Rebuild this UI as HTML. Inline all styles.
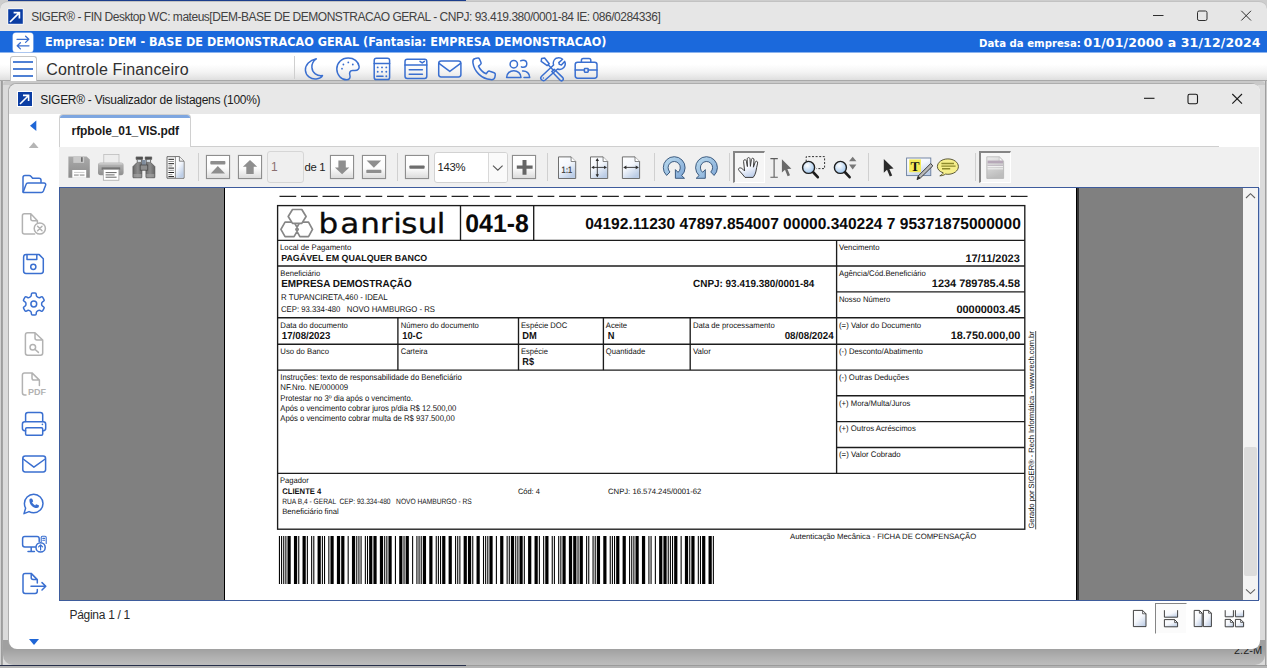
<!DOCTYPE html>
<html lang="pt-BR"><head><meta charset="utf-8"><title>SIGER - Visualizador de listagens</title>
<style>
html,body{margin:0;padding:0}
body{width:1267px;height:668px;overflow:hidden;position:relative;background:#cdcdcd;font-family:"Liberation Sans",sans-serif}
div,span.t,svg.a{position:absolute;box-sizing:border-box}
span.t{white-space:pre;display:block}
svg text{white-space:pre;text-rendering:geometricPrecision}
</style></head><body>
<div style="left:8px;top:0px;width:458px;height:1px;background:#1b3d8c"></div>
<div style="left:8px;top:1px;width:458px;height:1px;background:#7f90b8"></div>
<div class="mainwin" style="left:0px;top:1px;width:1267px;height:665px;background:#e6e6e6;border-radius:8px 8px 0 0;border-top:1px solid #c2c2c2"></div>
<svg class="a" style="left:7px;top:8px" width="17" height="17" viewBox="0 0 17 17"><rect x="0.5" y="0.5" width="16" height="16" fill="#fff"/><rect x="1.2" y="1.2" width="14.6" height="14.6" fill="#0b3da3"/><path d="M3 14 L11.6 5.4 M6.6 4.6 H12.4 V10.4" fill="none" stroke="#fff" stroke-width="1.7"/></svg>
<span class="t" style='left:31.20px;top:8.54px;font:12px/16px "Liberation Sans", sans-serif;color:#424242;letter-spacing:-0.474px;'>SIGER® - FIN Desktop WC: mateus[DEM-BASE DE DEMONSTRACAO GERAL - CNPJ: 93.419.380/0001-84 IE: 086/0284336]</span>
<svg class="a" style="left:1140px;top:4px" width="124" height="24" viewBox="1140 4 124 24" fill="none" stroke="#2e2e2e" stroke-width="1"><path d="M1153 15.5H1163.5"/><rect x="1197.5" y="11" width="9.5" height="9.5" rx="1.6"/><path d="M1241.3 10.8L1251 20.5M1251 10.8L1241.3 20.5"/></svg>
<div style="left:0px;top:31px;width:1267px;height:21px;background:#1b69dc"></div>
<div style="left:0px;top:52px;width:1267px;height:1px;background:#8db4ee"></div>
<div style="left:13px;top:33px;width:20px;height:19px;background:#fff;border-radius:3px;box-shadow:0 0 0 0.5px #c9d8f2"></div>
<svg class="a" style="left:13px;top:33px" width="20" height="19" viewBox="0 0 20 19" fill="none" stroke="#3b6fd0" stroke-width="1.3" stroke-linecap="round" stroke-linejoin="round"><path d="M4 6.3H15.5M12.6 3.2L15.8 6.3L12.6 9.4"/><path d="M16 12.8H4.5M7.4 9.7L4.2 12.8L7.4 15.9"/></svg>
<span class="t" style='left:44.80px;top:34.25px;font:bold 12px/16px "DejaVu Sans", sans-serif;color:#fff;transform:scaleX(0.9371);transform-origin:0 0;'>Empresa: DEM - BASE DE DEMONSTRACAO GERAL (Fantasia: EMPRESA DEMONSTRACAO)</span>
<span class="t" style='left:979.20px;top:36.59px;font:bold 11px/14px "DejaVu Sans", sans-serif;color:#fff;transform:scaleX(0.9234);transform-origin:0 0;'>Data da empresa:</span>
<span class="t" style='left:1083.60px;top:35.17px;font:bold 12.5px/16px "DejaVu Sans", sans-serif;color:#fff;letter-spacing:0.106px;'>01/01/2000 a 31/12/2024</span>
<div style="left:0px;top:53px;width:1267px;height:28px;background:linear-gradient(#fff 0,#fff 42%,#f4f4f4 70%,#dfdfdf 100%);border-bottom:1px solid #a9a9a9"></div>
<div style="left:9.5px;top:55.5px;width:27px;height:26px;border:1px solid #c4c4c4;border-bottom:none;border-radius:3px 3px 0 0;background:#fff"></div>
<div style="left:13px;top:61px;width:19.5px;height:2px;background:#4f80d4"></div>
<div style="left:13px;top:67.5px;width:19.5px;height:2px;background:#4f80d4"></div>
<div style="left:13px;top:74.5px;width:19.5px;height:2px;background:#4f80d4"></div>
<span class="t" style='left:46.20px;top:58.66px;font:16px/21px "Liberation Sans", sans-serif;color:#303030;letter-spacing:0.162px;'>Controle Financeiro</span>
<div style="left:293.5px;top:56px;width:1px;height:23px;background:#cfcfcf"></div>
<div style="left:0px;top:81px;width:1267px;height:585px;background:#dbdbdb"></div>
<div style="left:0px;top:81px;width:1px;height:585px;background:#d2d2d2"></div>
<div style="left:1px;top:81px;width:2px;height:585px;background:linear-gradient(90deg,#9a9a9a,#a8a8a8)"></div>
<div style="left:1265px;top:81px;width:1px;height:585px;background:#a0a0a0"></div>
<div style="left:1266px;top:81px;width:1px;height:585px;background:#cacaca"></div>
<div style="left:3px;top:81px;width:1262px;height:4px;background:#c9c9c9;border-radius:9px 9px 0 0"></div>
<div style="left:3px;top:640px;width:1262px;height:25px;background:linear-gradient(#a0a0a0 0,#a0a0a0 36%,#b1b1b1 70%,#bcbcbc 100%);border-radius:0 0 10px 10px"></div>
<div style="left:0px;top:665px;width:1267px;height:1px;background:#9b9b9b"></div>
<div style="left:0px;top:665px;width:466px;height:1px;background:#272f4a"></div>
<div style="left:0px;top:666px;width:1267px;height:2px;background:#b4b4b4"></div>
<span class="t" style='left:1234.00px;top:643.39px;font:11px/14px "Liberation Sans", sans-serif;color:#222;'>2.2-M</span>
<div class="innerwin" style="left:9px;top:84px;width:1251px;height:565px;background:#fff;border-radius:8px;box-shadow:-1px -1px 0 0 #aeaeae;overflow:hidden"><div style="left:0;top:0;width:1252px;height:29.5px;background:#e8e8e8"></div></div>
<svg class="a" style="left:17px;top:91px" width="16" height="16" viewBox="0 0 16 16"><rect x="0" y="0" width="16" height="16" fill="#fff"/><rect x="1" y="1" width="14" height="14" fill="#0b3da3"/><path d="M3 13 L10.8 5.2 M6 4.4 H11.6 V10" fill="none" stroke="#fff" stroke-width="1.6"/></svg>
<span class="t" style='left:40.30px;top:91.94px;font:12px/16px "Liberation Sans", sans-serif;color:#1c1c1c;letter-spacing:-0.278px;'>SIGER® - Visualizador de listagens (100%)</span>
<svg class="a" style="left:1135px;top:88px" width="120" height="22" viewBox="1135 88 120 22" fill="none" stroke="#1a1a1a" stroke-width="1.1"><path d="M1144 98.3H1154.5"/><rect x="1188" y="94.3" width="9.5" height="9.5" rx="1.6"/><path d="M1232.3 94L1242 103.7M1242 94L1232.3 103.7"/></svg>
<svg class="a" style="left:28px;top:119px" width="12" height="32" viewBox="28 119 12 32"><path d="M36.3 120.5V131L30 125.8Z" fill="#1f66d6"/><path d="M28.8 148H38.6L33.7 142.3Z" fill="#b5b5b5"/></svg>
<svg class="a" style="left:27px;top:637px" width="14" height="10" viewBox="27 637 14 10"><path d="M29 639H39L34 645Z" fill="#1f66d6"/></svg>
<div style="left:59px;top:146px;width:1160px;height:1px;background:#cfcfcf"></div>
<div style="left:59px;top:114px;width:132px;height:33px;background:#fff;border:1px solid #d0d0d0;border-bottom:none;border-radius:4px 4px 0 0;overflow:hidden"><div style="left:0;top:0;width:132px;height:3px;background:#7ea6e0"></div></div>
<span class="t" style='left:71.60px;top:122.84px;font:bold 12px/16px "Liberation Sans", sans-serif;color:#1a1a1a;letter-spacing:-0.072px;'>rfpbole_01_VIS.pdf</span>
<div style="left:59px;top:147px;width:1200px;height:40px;background:#f0f0f0"></div>
<div style="left:198.0px;top:152.5px;width:1px;height:28px;background:#d0d0d0"></div>
<div style="left:396.8px;top:152.5px;width:1px;height:28px;background:#d0d0d0"></div>
<div style="left:547.1px;top:152.5px;width:1px;height:28px;background:#d0d0d0"></div>
<div style="left:653.9px;top:152.5px;width:1px;height:28px;background:#d0d0d0"></div>
<div style="left:729.2px;top:152.5px;width:1px;height:28px;background:#d0d0d0"></div>
<div style="left:867.9px;top:152.5px;width:1px;height:28px;background:#d0d0d0"></div>
<div style="left:975.0px;top:152.5px;width:1px;height:28px;background:#d0d0d0"></div>
<div style="left:206px;top:155px;width:24px;height:24px;background:linear-gradient(#fff 0,#fcfcfc 55%,#dcdcdc 100%);border:1px solid #8e8e8e;box-shadow:0 0 1px rgba(0,0,0,.25)"></div>
<div style="left:238px;top:155px;width:24px;height:24px;background:linear-gradient(#fff 0,#fcfcfc 55%,#dcdcdc 100%);border:1px solid #8e8e8e;box-shadow:0 0 1px rgba(0,0,0,.25)"></div>
<div style="left:330px;top:155px;width:24px;height:24px;background:linear-gradient(#fff 0,#fcfcfc 55%,#dcdcdc 100%);border:1px solid #8e8e8e;box-shadow:0 0 1px rgba(0,0,0,.25)"></div>
<div style="left:362px;top:155px;width:24px;height:24px;background:linear-gradient(#fff 0,#fcfcfc 55%,#dcdcdc 100%);border:1px solid #8e8e8e;box-shadow:0 0 1px rgba(0,0,0,.25)"></div>
<div style="left:405px;top:155px;width:24px;height:24px;background:linear-gradient(#fff 0,#fcfcfc 55%,#dcdcdc 100%);border:1px solid #8e8e8e;box-shadow:0 0 1px rgba(0,0,0,.25)"></div>
<div style="left:512px;top:155px;width:24px;height:24px;background:linear-gradient(#fff 0,#fcfcfc 55%,#dcdcdc 100%);border:1px solid #8e8e8e;box-shadow:0 0 1px rgba(0,0,0,.25)"></div>
<div style="left:266.5px;top:151px;width:37px;height:31.5px;background:#efefef;border:1px solid #d6d6d6;border-radius:3px"></div>
<span class="t" style='left:271.00px;top:159.14px;font:12px/16px "Liberation Sans", sans-serif;color:#8a6f6f;'>1</span>
<span class="t" style='left:304.50px;top:159.88px;font:11.3px/15px "Liberation Sans", sans-serif;color:#222;letter-spacing:-0.298px;'>de 1</span>
<div style="left:433.5px;top:151.5px;width:74px;height:31px;background:#fff;border:1px solid #d2d2d2;border-radius:3px;overflow:hidden"><div style="left:53px;top:0;width:1px;height:31px;background:#d9d9d9"></div><div style="left:54px;top:0;width:19px;height:31px;background:#fafafa"></div></div>
<span class="t" style='left:437.60px;top:160.38px;font:11.3px/15px "Liberation Sans", sans-serif;color:#222;letter-spacing:-0.275px;'>143%</span>
<svg class="a" style="left:491px;top:163px" width="14" height="9" viewBox="491 163 14 9" fill="none" stroke="#555" stroke-width="1.1"><path d="M493 165.6L497.8 170.2L502.6 165.6"/></svg>
<div style="left:733px;top:151px;width:32px;height:32px;background:#f6f6f6;border-top:2px solid #858585;border-left:2px solid #858585;border-right:1px solid #fff;border-bottom:1px solid #fff"></div>
<div style="left:979px;top:151px;width:32px;height:32px;background:#f6f6f6;border-top:2px solid #858585;border-left:2px solid #858585;border-right:1px solid #fff;border-bottom:1px solid #fff"></div>
<div class="viewport" style="left:59px;top:187px;width:1200px;height:414px;background:#808080;border:1px solid #3e5c9c;overflow:hidden"></div>
<div style="left:1259px;top:188px;width:1px;height:412px;background:#b8caea"></div>
<div style="left:1243px;top:188px;width:15px;height:412px;background:#f3f3f3"></div>
<div style="left:1243.5px;top:446.5px;width:13.5px;height:129px;background:#dcdcdc;border-radius:2px"></div>
<svg class="a" style="left:1243px;top:190px" width="15" height="12" viewBox="1243 190 15 12" fill="none" stroke="#606060" stroke-width="1.1"><path d="M1246 198L1250.5 193.7L1255 198"/></svg>
<svg class="a" style="left:1243px;top:586px" width="15" height="12" viewBox="1243 586 15 12" fill="none" stroke="#606060" stroke-width="1.1"><path d="M1246 589.3L1250.5 593.6L1255 589.3"/></svg>
<span class="t" style='left:69.50px;top:606.84px;font:12px/16px "Liberation Sans", sans-serif;color:#2a2a2a;letter-spacing:-0.296px;'>Página 1 / 1</span>
<div style="left:1155px;top:603px;width:32px;height:31px;border-top:1.5px solid #858585;border-left:1.5px solid #858585;border-right:1px solid #fff;border-bottom:1px solid #fff;background:#fbfbfb"></div>
<div style="left:60px;top:188px;width:1183px;height:412px;overflow:hidden"><svg class="a" style="left:-60px;top:-188px" width="1267" height="668" viewBox="0 0 1267 668" font-family='"Liberation Sans", sans-serif'><rect x="59" y="187" width="1200" height="414" fill="#808080"/>
<rect x="224" y="188" width="853" height="413" fill="#000"/>
<rect x="1077" y="188" width="2" height="413" fill="#333"/>
<rect x="225" y="188" width="851" height="413" fill="#fff"/>
<path d="M279.5 196.4H1027.7" stroke="#222" stroke-width="1.2" stroke-dasharray="16.7 4.81"/>
<rect x="277.6" y="205.6" width="747.1999999999999" height="323.6" fill="none" stroke="#1c1c1c" stroke-width="1.35"/>
<path d="M277.6 240.3H1024.8" stroke="#1c1c1c" stroke-width="1.35"/>
<path d="M277.6 266.0H1024.8" stroke="#1c1c1c" stroke-width="1.35"/>
<path d="M836.6 291.8H1024.8" stroke="#1c1c1c" stroke-width="1.35"/>
<path d="M277.6 317.7H1024.8" stroke="#1c1c1c" stroke-width="1.35"/>
<path d="M277.6 344.2H1024.8" stroke="#1c1c1c" stroke-width="1.35"/>
<path d="M277.6 370.1H1024.8" stroke="#1c1c1c" stroke-width="1.35"/>
<path d="M836.6 395.7H1024.8" stroke="#1c1c1c" stroke-width="1.35"/>
<path d="M836.6 421.6H1024.8" stroke="#1c1c1c" stroke-width="1.35"/>
<path d="M836.6 447.5H1024.8" stroke="#1c1c1c" stroke-width="1.35"/>
<path d="M277.6 473.3H1024.8" stroke="#1c1c1c" stroke-width="1.35"/>
<path d="M460.5 205.6V240.3" stroke="#1c1c1c" stroke-width="1.35"/>
<path d="M533.7 205.6V240.3" stroke="#1c1c1c" stroke-width="1.35"/>
<path d="M836.6 240.3V473.3" stroke="#1c1c1c" stroke-width="1.35"/>
<path d="M397.9 317.7V370.1" stroke="#1c1c1c" stroke-width="1.35"/>
<path d="M518.5 317.7V370.1" stroke="#1c1c1c" stroke-width="1.35"/>
<path d="M603.4 317.7V370.1" stroke="#1c1c1c" stroke-width="1.35"/>
<path d="M690.2 317.7V370.1" stroke="#1c1c1c" stroke-width="1.35"/>
<path d="M280.90 229.45L285.05 222.20L294.05 222.20L298.20 229.45L294.05 236.70L285.05 236.70ZM295.90 229.45L299.88 222.20L308.52 222.20L312.50 229.45L308.52 236.70L299.88 236.70Z" fill="none" stroke="#868686" stroke-width="1.7" stroke-linejoin="round"/><path d="M288.20 216.45L292.50 209.50L301.80 209.50L306.10 216.45L301.80 223.40L292.50 223.40Z" fill="#fff" stroke="#868686" stroke-width="1.7" stroke-linejoin="round"/>
<text transform="scale(1.12 1)" x="284.46 303.90 321.63 339.30 351.06 358.20 373.09 390.03" y="232.9" font-size="27.7" font-family='"DejaVu Sans", sans-serif' fill="#0a0a0a" stroke="#0a0a0a" stroke-width="0.3">banrisul</text>
<text x="465.30" y="231.70" font-size="25.4" font-weight="bold" fill="#0a0a0a" textLength="63.50" lengthAdjust="spacingAndGlyphs">041-8</text>
<text x="585.20" y="228.90" font-size="15.9" font-weight="bold" fill="#0a0a0a" textLength="435.60" lengthAdjust="spacingAndGlyphs">04192.11230 47897.854007 00000.340224 7 95371875000000</text>
<text x="280.00" y="250.00" font-size="8.1" fill="#111" textLength="71.20" lengthAdjust="spacingAndGlyphs">Local de Pagamento</text>
<text x="281.20" y="260.80" font-size="8.8" font-weight="bold" fill="#111" textLength="146.10" lengthAdjust="spacingAndGlyphs">PAGÁVEL EM QUALQUER BANCO</text>
<text x="280.30" y="275.50" font-size="8.1" fill="#111" textLength="39.90" lengthAdjust="spacingAndGlyphs">Beneficiário</text>
<text x="281.20" y="287.30" font-size="10.3" font-weight="bold" fill="#111" textLength="130.60" lengthAdjust="spacingAndGlyphs">EMPRESA DEMOSTRAÇÃO</text>
<text x="693.10" y="287.40" font-size="10.3" font-weight="bold" fill="#111" textLength="121.30" lengthAdjust="spacingAndGlyphs">CNPJ: 93.419.380/0001-84</text>
<text x="281.00" y="299.60" font-size="8.4" fill="#111" textLength="106.60" lengthAdjust="spacingAndGlyphs">R TUPANCIRETA,460 - IDEAL</text>
<text x="281.00" y="312.20" font-size="8.4" fill="#111" textLength="154.00" lengthAdjust="spacingAndGlyphs">CEP: 93.334-480   NOVO HAMBURGO - RS</text>
<text x="280.30" y="327.50" font-size="8.1" fill="#111" textLength="67.64" lengthAdjust="spacingAndGlyphs">Data do documento</text>
<text x="281.80" y="338.70" font-size="10.2" font-weight="bold" fill="#111" textLength="48.50" lengthAdjust="spacingAndGlyphs">17/08/2023</text>
<text x="400.70" y="327.50" font-size="8.1" fill="#111" textLength="78.20" lengthAdjust="spacingAndGlyphs">Número do documento</text>
<text x="402.30" y="338.70" font-size="10.2" font-weight="bold" fill="#111" textLength="20.10" lengthAdjust="spacingAndGlyphs">10-C</text>
<text x="521.00" y="327.50" font-size="8.1" fill="#111" textLength="46.30" lengthAdjust="spacingAndGlyphs">Espécie DOC</text>
<text x="522.30" y="338.70" font-size="10.2" font-weight="bold" fill="#111" textLength="14.50" lengthAdjust="spacingAndGlyphs">DM</text>
<text x="605.80" y="327.50" font-size="8.1" fill="#111" textLength="21.30" lengthAdjust="spacingAndGlyphs">Aceite</text>
<text x="607.80" y="338.70" font-size="10.2" font-weight="bold" fill="#111" textLength="6.70" lengthAdjust="spacingAndGlyphs">N</text>
<text x="692.90" y="327.50" font-size="8.1" fill="#111" textLength="81.90" lengthAdjust="spacingAndGlyphs">Data de processamento</text>
<text x="784.70" y="338.70" font-size="10.2" font-weight="bold" fill="#111" textLength="48.90" lengthAdjust="spacingAndGlyphs">08/08/2024</text>
<text x="280.30" y="354.00" font-size="8.1" fill="#111" textLength="48.68" lengthAdjust="spacingAndGlyphs">Uso do Banco</text>
<text x="400.70" y="354.00" font-size="8.1" fill="#111" textLength="26.90" lengthAdjust="spacingAndGlyphs">Carteira</text>
<text x="521.00" y="354.00" font-size="8.1" fill="#111" textLength="26.90" lengthAdjust="spacingAndGlyphs">Espécie</text>
<text x="522.30" y="364.60" font-size="10.2" font-weight="bold" fill="#111" textLength="11.70" lengthAdjust="spacingAndGlyphs">R$</text>
<text x="605.80" y="354.00" font-size="8.1" fill="#111" textLength="39.40" lengthAdjust="spacingAndGlyphs">Quantidade</text>
<text x="692.90" y="354.00" font-size="8.1" fill="#111" textLength="17.90" lengthAdjust="spacingAndGlyphs">Valor</text>
<text x="839.00" y="250.20" font-size="8.1" fill="#111" textLength="40.60" lengthAdjust="spacingAndGlyphs">Vencimento</text>
<text x="965.40" y="261.60" font-size="10.9" font-weight="bold" fill="#111" textLength="54.40" lengthAdjust="spacingAndGlyphs">17/11/2023</text>
<text x="839.00" y="276.00" font-size="8.1" fill="#111" textLength="86.80" lengthAdjust="spacingAndGlyphs">Agência/Cód.Beneficiário</text>
<text x="931.80" y="287.40" font-size="10.9" font-weight="bold" fill="#111" textLength="88.20" lengthAdjust="spacingAndGlyphs">1234 789785.4.58</text>
<text x="839.00" y="301.80" font-size="8.1" fill="#111" textLength="51.30" lengthAdjust="spacingAndGlyphs">Nosso Número</text>
<text x="956.40" y="313.10" font-size="10.9" font-weight="bold" fill="#111" textLength="64.00" lengthAdjust="spacingAndGlyphs">00000003.45</text>
<text x="839.00" y="327.90" font-size="8.1" fill="#111" textLength="82.20" lengthAdjust="spacingAndGlyphs">(=) Valor do Documento</text>
<text x="950.70" y="339.20" font-size="10.9" font-weight="bold" fill="#111" textLength="69.70" lengthAdjust="spacingAndGlyphs">18.750.000,00</text>
<text x="839.00" y="354.10" font-size="8.1" fill="#111" textLength="83.90" lengthAdjust="spacingAndGlyphs">(-) Desconto/Abatimento</text>
<text x="839.00" y="379.70" font-size="8.1" fill="#111" textLength="70.00" lengthAdjust="spacingAndGlyphs">(-) Outras Deduções</text>
<text x="839.00" y="405.60" font-size="8.1" fill="#111" textLength="71.30" lengthAdjust="spacingAndGlyphs">(+) Mora/Multa/Juros</text>
<text x="839.00" y="431.30" font-size="8.1" fill="#111" textLength="76.80" lengthAdjust="spacingAndGlyphs">(+) Outros Acréscimos</text>
<text x="839.00" y="457.10" font-size="8.1" fill="#111" textLength="61.70" lengthAdjust="spacingAndGlyphs">(=) Valor Cobrado</text>
<text x="280.30" y="380.20" font-size="8.4" fill="#111" textLength="181.50" lengthAdjust="spacingAndGlyphs">Instruções: texto de responsabilidade do Beneficiário</text>
<text x="280.30" y="390.40" font-size="8.4" fill="#111" textLength="67.80" lengthAdjust="spacingAndGlyphs">NF.Nro. NE/000009</text>
<text x="280.30" y="400.70" font-size="8.4" fill="#111" textLength="132.60" lengthAdjust="spacingAndGlyphs">Protestar no 3º dia após o vencimento.</text>
<text x="280.30" y="410.90" font-size="8.4" fill="#111" textLength="176.00" lengthAdjust="spacingAndGlyphs">Após o vencimento cobrar juros p/dia R$ 12.500,00</text>
<text x="280.30" y="421.10" font-size="8.4" fill="#111" textLength="174.40" lengthAdjust="spacingAndGlyphs">Após o vencimento cobrar multa de R$ 937.500,00</text>
<text x="280.00" y="483.40" font-size="8.1" fill="#111" textLength="28.80" lengthAdjust="spacingAndGlyphs">Pagador</text>
<text x="282.20" y="493.90" font-size="8.1" font-weight="bold" fill="#111" textLength="39.10" lengthAdjust="spacingAndGlyphs">CLIENTE 4</text>
<text x="517.90" y="493.80" font-size="7.8" fill="#111" textLength="22.00" lengthAdjust="spacingAndGlyphs">Cód: 4</text>
<text x="608.00" y="493.80" font-size="7.8" fill="#111" textLength="93.40" lengthAdjust="spacingAndGlyphs">CNPJ: 16.574.245/0001-62</text>
<text x="282.20" y="504.20" font-size="7.8" fill="#111" textLength="189.60" lengthAdjust="spacingAndGlyphs">RUA B,4 - GERAL  CEP: 93.334-480   NOVO HAMBURGO - RS</text>
<text x="282.20" y="514.30" font-size="7.8" fill="#111" textLength="56.50" lengthAdjust="spacingAndGlyphs">Beneficiário final</text>
<text x="790.10" y="539.10" font-size="7.8" fill="#111" textLength="186.10" lengthAdjust="spacingAndGlyphs">Autenticação Mecânica - FICHA DE COMPENSAÇÃO</text>
<text transform="translate(1034.2 528.6) rotate(-90)" font-size="7.7" fill="#111" textLength="197.4" lengthAdjust="spacingAndGlyphs">Gerado por SIGER® - Rech Informática - www.rech.com.br</text>
<path d="M1035.7 331V529.4" stroke="#222" stroke-width="0.8"/>
<path d="M278.90 536.1h1.07v48h-1.07zM281.05 536.1h1.07v48h-1.07zM283.20 536.1h1.07v48h-1.07zM285.34 536.1h1.07v48h-1.07zM287.49 536.1h3.22v48h-3.22zM293.94 536.1h3.22v48h-3.22zM298.23 536.1h1.07v48h-1.07zM302.53 536.1h3.22v48h-3.22zM306.83 536.1h1.07v48h-1.07zM311.12 536.1h1.07v48h-1.07zM313.27 536.1h1.07v48h-1.07zM317.57 536.1h3.22v48h-3.22zM321.86 536.1h1.07v48h-1.07zM324.01 536.1h1.07v48h-1.07zM328.31 536.1h1.07v48h-1.07zM330.46 536.1h3.22v48h-3.22zM336.90 536.1h3.22v48h-3.22zM341.20 536.1h3.22v48h-3.22zM347.64 536.1h1.07v48h-1.07zM351.94 536.1h3.22v48h-3.22zM356.23 536.1h1.07v48h-1.07zM358.38 536.1h1.07v48h-1.07zM360.53 536.1h1.07v48h-1.07zM364.83 536.1h1.07v48h-1.07zM366.97 536.1h1.07v48h-1.07zM369.12 536.1h3.22v48h-3.22zM373.42 536.1h3.22v48h-3.22zM379.86 536.1h3.22v48h-3.22zM384.16 536.1h1.07v48h-1.07zM386.31 536.1h1.07v48h-1.07zM388.46 536.1h3.22v48h-3.22zM394.90 536.1h1.07v48h-1.07zM399.20 536.1h3.22v48h-3.22zM403.49 536.1h1.07v48h-1.07zM405.64 536.1h3.22v48h-3.22zM412.09 536.1h1.07v48h-1.07zM416.38 536.1h1.07v48h-1.07zM418.53 536.1h1.07v48h-1.07zM420.68 536.1h1.07v48h-1.07zM422.83 536.1h3.22v48h-3.22zM429.27 536.1h3.22v48h-3.22zM435.71 536.1h1.07v48h-1.07zM437.86 536.1h1.07v48h-1.07zM440.01 536.1h1.07v48h-1.07zM442.16 536.1h3.22v48h-3.22zM448.60 536.1h3.22v48h-3.22zM455.05 536.1h1.07v48h-1.07zM457.20 536.1h1.07v48h-1.07zM459.34 536.1h1.07v48h-1.07zM463.64 536.1h3.22v48h-3.22zM467.94 536.1h3.22v48h-3.22zM472.23 536.1h1.07v48h-1.07zM476.53 536.1h3.22v48h-3.22zM482.97 536.1h1.07v48h-1.07zM485.12 536.1h1.07v48h-1.07zM487.27 536.1h1.07v48h-1.07zM489.42 536.1h3.22v48h-3.22zM495.86 536.1h1.07v48h-1.07zM500.16 536.1h3.22v48h-3.22zM506.60 536.1h1.07v48h-1.07zM508.75 536.1h1.07v48h-1.07zM510.90 536.1h3.22v48h-3.22zM515.20 536.1h1.07v48h-1.07zM517.34 536.1h1.07v48h-1.07zM519.49 536.1h3.22v48h-3.22zM523.79 536.1h1.07v48h-1.07zM528.09 536.1h3.22v48h-3.22zM534.53 536.1h3.22v48h-3.22zM538.83 536.1h1.07v48h-1.07zM543.12 536.1h1.07v48h-1.07zM545.27 536.1h3.22v48h-3.22zM551.71 536.1h1.07v48h-1.07zM553.86 536.1h1.07v48h-1.07zM558.16 536.1h1.07v48h-1.07zM560.31 536.1h1.07v48h-1.07zM562.46 536.1h3.22v48h-3.22zM568.90 536.1h3.22v48h-3.22zM573.20 536.1h3.22v48h-3.22zM577.49 536.1h1.07v48h-1.07zM579.64 536.1h3.22v48h-3.22zM586.09 536.1h1.07v48h-1.07zM588.23 536.1h1.07v48h-1.07zM592.53 536.1h1.07v48h-1.07zM594.68 536.1h1.07v48h-1.07zM596.83 536.1h3.22v48h-3.22zM603.27 536.1h3.22v48h-3.22zM609.71 536.1h1.07v48h-1.07zM611.86 536.1h1.07v48h-1.07zM614.01 536.1h1.07v48h-1.07zM616.16 536.1h3.22v48h-3.22zM622.60 536.1h3.22v48h-3.22zM629.05 536.1h1.07v48h-1.07zM631.20 536.1h1.07v48h-1.07zM633.34 536.1h1.07v48h-1.07zM635.49 536.1h3.22v48h-3.22zM641.94 536.1h3.22v48h-3.22zM648.38 536.1h1.07v48h-1.07zM650.53 536.1h1.07v48h-1.07zM654.83 536.1h1.07v48h-1.07zM659.12 536.1h3.22v48h-3.22zM663.42 536.1h3.22v48h-3.22zM667.71 536.1h1.07v48h-1.07zM669.86 536.1h1.07v48h-1.07zM672.01 536.1h1.07v48h-1.07zM674.16 536.1h3.22v48h-3.22zM680.60 536.1h1.07v48h-1.07zM684.90 536.1h3.22v48h-3.22zM689.20 536.1h1.07v48h-1.07zM691.34 536.1h3.22v48h-3.22zM697.79 536.1h1.07v48h-1.07zM699.94 536.1h1.07v48h-1.07zM702.09 536.1h3.22v48h-3.22zM708.53 536.1h3.22v48h-3.22zM712.83 536.1h1.07v48h-1.07z" fill="#000"/></svg></div>
<svg class="a" style="left:300px;top:55px" width="300" height="27" viewBox="300 55 300 27" fill="none" stroke="#3a6fd0" stroke-width="1.5" stroke-linecap="round" stroke-linejoin="round"><path d="M316.3 58.8C309.6 60.2 305.2 64.8 305.4 70.2C305.7 76 311 79.4 316.2 78.9C319.3 78.6 321.6 77.2 322.5 75.6C317 76.4 312.3 72.8 311.9 67.5C311.6 63.6 313.6 60.6 316.3 58.8Z"/><path d="M348.2 58C341.5 58 336.8 63 336.8 69C336.8 75 341.5 79.8 346.5 79.8C349.5 79.8 350.6 77.8 349.9 75.4C349.2 73 349.6 70.6 352.6 70.6H355C358 70.6 359.4 68.6 359.1 66.4C358.4 61.4 354 58 348.2 58Z"/><circle cx="348.3" cy="62.4" r="0.9" fill="#3a6fd0" stroke="none"/><circle cx="343.4" cy="64.5" r="0.9" fill="#3a6fd0" stroke="none"/><circle cx="352.8" cy="64.5" r="0.9" fill="#3a6fd0" stroke="none"/><circle cx="342" cy="68.7" r="0.9" fill="#3a6fd0" stroke="none"/><rect x="374.2" y="58.2" width="15.4" height="21.4" rx="2.2"/><path d="M374.2 63.6H389.6"/><circle cx="377.7" cy="67.4" r="0.95" fill="#3a6fd0" stroke="none"/><circle cx="382" cy="67.4" r="0.95" fill="#3a6fd0" stroke="none"/><circle cx="386.3" cy="67.4" r="0.95" fill="#3a6fd0" stroke="none"/><circle cx="377.7" cy="71.8" r="0.95" fill="#3a6fd0" stroke="none"/><circle cx="382" cy="71.8" r="0.95" fill="#3a6fd0" stroke="none"/><circle cx="386.3" cy="71.8" r="0.95" fill="#3a6fd0" stroke="none"/><path d="M376.8 76.3H383"/><circle cx="386.3" cy="76.3" r="0.95" fill="#3a6fd0" stroke="none"/><rect x="405" y="59.3" width="21.8" height="19.2" rx="2.2"/><path d="M405 65H426.8M409.2 69.7H422.4M409.2 74.2H422.4M420 61.4L422.2 62.9L424.4 61.4"/><rect x="438.7" y="61" width="22.2" height="16" rx="2.4"/><path d="M439 63.4L449.8 71.4L460.6 63.4"/><path d="M475.2 58.6C473.6 58.9 472.6 60.2 472.9 62.6C474.2 71.6 481.3 78.6 490.6 79.6C493.2 79.9 494.6 78.9 494.9 77.2L495.3 74.6C495.4 73.7 494.9 73 494.1 72.7L489.8 71.2C489 70.9 488.2 71.2 487.7 71.8L486.2 73.8C482.6 72.2 480 69.6 478.5 66.1L480.5 64.5C481.1 64 481.3 63.2 481 62.5L479.4 58.9C479.1 58.2 478.3 57.9 477.5 58.1Z"/><circle cx="513.8" cy="64.2" r="3.7"/><path d="M506.6 77.4C506.6 73.4 509.8 70.8 513.8 70.8C517.8 70.8 521 73.4 521 77.4Z"/><path d="M520.6 60.8C521.3 60.4 522.2 60.2 523.1 60.2C525.3 60.2 526.8 61.8 526.8 63.8C526.8 65.8 525.3 67.3 523.1 67.3C522.5 67.3 521.9 67.2 521.4 66.9M522.6 70.9C526.6 70.7 529.7 73.4 529.7 77.4H524"/><path d="M541.6 58.6L544.6 58L549.2 63.8L547.2 65.6L541.2 61.4ZM548.2 64.8L553.6 70.4M554.2 69.2L562.8 77.6C563.6 78.6 563.4 79.8 562.6 80.4C561.8 81 560.6 80.8 559.9 80L551.8 71.6Z"/><path d="M556.2 58.2C558.4 57.4 561 57.8 562.6 59.2L558.8 62.6L559.4 64.4L561.4 65L564.6 61.4C565.6 63.4 565.4 65.8 563.8 67.6C562.2 69.4 559.6 69.8 557.6 69L545.2 80C544.2 80.8 542.6 80.8 541.6 79.8C540.6 78.8 540.6 77.2 541.6 76.2L553.6 65C552.8 62.6 553.8 59.6 556.2 58.2Z"/><circle cx="543.4" cy="78" r="0.7" fill="#3a6fd0" stroke="none"/><rect x="575.2" y="62.2" width="21.8" height="16" rx="2.4"/><path d="M581.4 62.2V60.2C581.4 59 582.2 58.4 583.2 58.4H589C590 58.4 590.8 59 590.8 60.2V62.2M575.2 70.1H584.4M588.2 70.1H597"/><rect x="584.4" y="68.6" width="3.8" height="3.6" rx="0.6"/></svg>
<svg class="a" style="left:18px;top:170px" width="32" height="430" viewBox="18 170 32 430" fill="none" stroke="#3a6fd0" stroke-width="1.5" stroke-linecap="round" stroke-linejoin="round"><path d="M23 191.2V177.4C23 176.2 23.8 175.4 25 175.4H29.2C29.9 175.4 30.5 175.7 30.9 176.2L32.6 178.2H39C40.2 178.2 41 179 41 180.2V182.6"/><path d="M23 192.4L26 184.4C26.3 183.5 27 183 27.9 183H44C45.3 183 46 184 45.6 185.2L43.4 191C43 191.9 42.3 192.4 41.4 192.4H24C23.4 192.4 23 192 23 191.4"/><g stroke="#b2b2b2"><path d="M34.6 233.9H24.4C23.2 233.9 22.4 233.1 22.4 231.9V215.7C22.4 214.5 23.2 213.7 24.4 213.7H30.8L37.4 220.7V222.4M30.8 213.7V218.7C30.8 219.9 31.6 220.7 32.8 220.7H37.4"/><circle cx="39.8" cy="228.5" r="5.6"/><path d="M37.6 226.3L42 230.7M42 226.3L37.6 230.7"/></g><path d="M26 254.6H39.2L43.3 258.7V271C43.3 272.4 42.4 273.4 41 273.4H26C24.6 273.4 23.6 272.4 23.6 271V257C23.6 255.6 24.6 254.6 26 254.6Z"/><path d="M27 254.8V259.4H36.8V254.8"/><circle cx="33.3" cy="266.8" r="2.6"/><path d="M30.30 296.97Q31.25 296.42 31.31 295.32L31.39 294.05Q31.45 292.95 32.55 292.95L35.05 292.95Q36.15 292.95 36.21 294.05L36.29 295.32Q36.35 296.42 37.30 296.97L38.14 297.45Q39.09 298.00 40.07 297.51L41.21 296.93Q42.20 296.44 42.75 297.39L44.00 299.56Q44.55 300.51 43.63 301.11L42.56 301.81Q41.64 302.42 41.64 303.52L41.64 304.48Q41.64 305.58 42.56 306.19L43.63 306.89Q44.55 307.49 44.00 308.44L42.75 310.61Q42.20 311.56 41.21 311.07L40.07 310.49Q39.09 310.00 38.14 310.55L37.30 311.03Q36.35 311.58 36.29 312.68L36.21 313.95Q36.15 315.05 35.05 315.05L32.55 315.05Q31.45 315.05 31.39 313.95L31.31 312.68Q31.25 311.58 30.30 311.03L29.46 310.55Q28.51 310.00 27.53 310.49L26.39 311.07Q25.40 311.56 24.85 310.61L23.60 308.44Q23.05 307.49 23.97 306.89L25.04 306.19Q25.96 305.58 25.96 304.48L25.96 303.52Q25.96 302.42 25.04 301.81L23.97 301.11Q23.05 300.51 23.60 299.56L24.85 297.39Q25.40 296.44 26.39 296.93L27.53 297.51Q28.51 298.00 29.46 297.45Z" stroke-linejoin="round"/><circle cx="33.8" cy="304" r="2.9"/><g stroke="#b2b2b2"><path d="M27.6 332.8H35L42.7 340V353.1C42.7 354.4 41.8 355.3 40.5 355.3H27.6C26.3 355.3 25.4 354.4 25.4 353.1V335C25.4 333.7 26.3 332.8 27.6 332.8ZM35 332.8V338C35 339.2 35.8 340 37 340H42.7"/><circle cx="32.8" cy="347.2" r="2.8"/><path d="M34.9 349.3L38.4 352.4"/></g><g stroke="#b2b2b2"><path d="M26 395H24.6C23.3 395 22.4 394.1 22.4 392.8V375.1C22.4 373.8 23.3 372.9 24.6 372.9H32L39.4 380.1V385.6M32 372.9V378C32 379.3 32.8 380.1 34 380.1H39.4"/></g><text x="28" y="395.2" font-size="8.6" font-weight="bold" fill="#b2b2b2" stroke="none" textLength="18" lengthAdjust="spacingAndGlyphs" font-family='"Liberation Sans", sans-serif'>PDF</text><path d="M25.6 421.6V414.8C25.6 413.4 26.6 412.4 28 412.4H40.3C41.7 412.4 42.7 413.4 42.7 414.8V421.6"/><path d="M25.6 430.7H24.8C23.4 430.7 22.4 429.7 22.4 428.3V424.2C22.4 422.8 23.4 421.8 24.8 421.8H43.3C44.7 421.8 45.7 422.8 45.7 424.2V428.3C45.7 429.7 44.7 430.7 43.3 430.7H42.7"/><rect x="25.6" y="427.8" width="17.1" height="7.4" rx="1.2"/><circle cx="42.4" cy="424.4" r="0.8" fill="#3a6fd0" stroke="none"/><rect x="22.8" y="456" width="22.8" height="16" rx="2.4"/><path d="M23.2 459L33.9 467.2L45.2 459"/><path d="M24 513.6L25.6 508.2C24.8 506.8 24.4 505.2 24.4 503.5C24.4 498.4 28.6 494.2 33.7 494.2C38.8 494.2 43 498.4 43 503.5C43 508.6 38.8 512.8 33.7 512.8C32 512.8 30.4 512.4 29 511.6Z"/><path d="M30.6 498.6C30 498.7 29.4 499.4 29.4 500.4C29.6 504.6 32.8 507.8 37 508C38 508 38.7 507.4 38.8 506.8L38.9 505.9C38.9 505.5 38.7 505.2 38.4 505.1L36.6 504.4C36.3 504.3 36 504.4 35.8 504.6L35.2 505.4C33.8 504.8 32.7 503.7 32.1 502.3L32.9 501.7C33.1 501.5 33.2 501.2 33.1 500.9L32.3 499C32.2 498.7 31.9 498.5 31.5 498.5Z" fill="#3a6fd0" stroke="none"/><path d="M35.6 547H24.8C23.5 547 22.6 546.1 22.6 544.8V538.7C22.6 537.4 23.5 536.5 24.8 536.5H37C38.3 536.5 39.2 537.4 39.2 538.7V541.6M28 551.4H34.4M31.2 547V551.4"/><path d="M41.2 541.8V537.4C41.2 536.7 41.7 536.2 42.4 536.2H45C45.7 536.2 46.2 536.7 46.2 537.4V543.4M42.8 538.4H44.6M42.8 540.2H44.6" stroke-width="1.1"/><circle cx="40.6" cy="547.4" r="4.6" fill="#fff"/><path d="M40.6 550V545M38.6 546.8L40.6 544.8L42.6 546.8" stroke-width="1.2"/><path d="M37.3 589.6V591.3C37.3 592.6 36.4 593.5 35.1 593.5H25.2C23.9 593.5 23 592.6 23 591.3V575.6C23 574.3 23.9 573.4 25.2 573.4H31.2L37.3 579.6V583M31.2 573.4V577.6C31.2 578.8 32 579.6 33.2 579.6H37.3"/><path d="M31 586.3H45.6M42 582.6L45.8 586.3L42 590"/></svg>
<svg class="a" style="left:60px;top:150px" width="960" height="34" viewBox="60 150 960 34" ><defs>
<linearGradient id="gSave" x1="0" y1="0" x2="0" y2="1"><stop offset="0" stop-color="#aaaaaa"/><stop offset="1" stop-color="#8b8b8b"/></linearGradient>
<linearGradient id="gPr" x1="0" y1="0" x2="0" y2="1"><stop offset="0" stop-color="#b9b9b9"/><stop offset="1" stop-color="#8f8f8f"/></linearGradient>
<linearGradient id="gPg" x1="0" y1="0" x2="0.6" y2="1"><stop offset="0" stop-color="#ffffff"/><stop offset="0.5" stop-color="#f4f7fc"/><stop offset="1" stop-color="#bccde6"/></linearGradient>
<linearGradient id="gRot" x1="0" y1="0" x2="1" y2="1"><stop offset="0" stop-color="#bcdcee"/><stop offset="1" stop-color="#7ea6d6"/></linearGradient>
<linearGradient id="gHand" x1="0.2" y1="0" x2="0.6" y2="1"><stop offset="0" stop-color="#ffffff"/><stop offset="0.5" stop-color="#fafbff"/><stop offset="1" stop-color="#bccdea"/></linearGradient>
<radialGradient id="gLens" cx="0.4" cy="0.35" r="0.7"><stop offset="0" stop-color="#ffffff"/><stop offset="1" stop-color="#9cc4ec"/></radialGradient>
<linearGradient id="gGp" x1="0" y1="0" x2="0.3" y2="1"><stop offset="0" stop-color="#ececec"/><stop offset="1" stop-color="#bdbdbd"/></linearGradient>
<linearGradient id="gBino" x1="0" y1="0" x2="1" y2="0"><stop offset="0" stop-color="#686868"/><stop offset="0.5" stop-color="#8c8c8c"/><stop offset="1" stop-color="#666"/></linearGradient>
</defs><path d="M68.4 156.4H86.6L89.8 159.6V177.8H68.4Z" fill="url(#gSave)"/><rect x="73.3" y="156.4" width="10.8" height="6.5" fill="#c9c9c9"/><rect x="81" y="157.2" width="1.7" height="4.6" fill="#6c6c6c"/><rect x="72.3" y="170" width="13.9" height="7.8" fill="#fff"/><rect x="74" y="171.9" width="10.5" height="1.1" fill="#cfcfcf"/><rect x="74" y="174.2" width="10.5" height="1.9" fill="#b8b8b8"/><rect x="78.7" y="174.2" width="1.1" height="1.9" fill="#fff"/><rect x="103.8" y="154.4" width="15.2" height="10" fill="#ededed" stroke="#b7b7b7" stroke-width="0.7"/><rect x="98" y="162.4" width="25.6" height="12.8" rx="2.6" fill="url(#gPr)"/><rect x="98.8" y="163.2" width="24" height="1.2" rx="0.6" fill="#cfcfcf"/><rect x="101.6" y="167.4" width="18.6" height="2.4" fill="#757575"/><rect x="103.3" y="169.4" width="15.6" height="10.8" fill="#fff" stroke="#9c9c9c" stroke-width="0.7"/><path d="M105.6 172.6H116.6M105.6 174.9H114.6M105.6 177.2H116.6" stroke="#666" stroke-width="1"/><path d="M136.1 156.9H142.6V159.4H141.5V162.6L141.9 163V177.2Q141.9 177.8 141.3 177.8H133.5Q132.9 177.8 132.9 177.2V166.6L137.2 162.3V159.4H136.1Z" fill="url(#gBino)" stroke="#4a4a4a" stroke-width="0.6"/><path d="M151.7 156.9H145.2V159.4H146.3V162.6L145.9 163V177.2Q145.9 177.8 146.5 177.8H154.3Q154.9 177.8 154.9 177.2V166.6L150.6 162.3V159.4H151.7Z" fill="url(#gBino)" stroke="#4a4a4a" stroke-width="0.6"/><rect x="142" y="160" width="3.8" height="5.4" fill="#7f8c9c"/><rect x="140.2" y="165" width="7.5" height="5.2" fill="#8e8e8e" stroke="#4c4c4c" stroke-width="0.8"/><rect x="137.8" y="160.1" width="3.2" height="1.7" fill="#e3ebf2"/><rect x="146.8" y="160.1" width="3.2" height="1.7" fill="#e3ebf2"/><rect x="136.4" y="157.2" width="5.9" height="1.9" fill="#4e4e4e"/><rect x="145.5" y="157.2" width="5.9" height="1.9" fill="#4e4e4e"/><rect x="133.5" y="174" width="7.9" height="3.1" fill="#a2a2a2" opacity="0.7"/><rect x="146.4" y="174" width="7.9" height="3.1" fill="#a2a2a2" opacity="0.7"/><path d="M167 156.7H179.4L184 161.2V178.2H167Z" fill="#fff" stroke="#555" stroke-width="0.9"/><path d="M175.5 157.2H179.2L183.5 161.4V177.7H175.5Z" fill="url(#gPg)"/><path d="M179.4 156.7V161.2H184" fill="#f2f2f2" stroke="#555" stroke-width="0.7"/><path d="M175.4 156.7V178.2" stroke="#707070" stroke-width="0.8"/><path d="M168.4 159.3H174M168.4 163.7H174M168.4 168.1H174M168.4 172.5H174M168.4 176.6H174" stroke="#1e1e1e" stroke-width="1"/><path d="M168.4 161.5H174M168.4 165.9H172.4M168.4 170.3H174M168.4 174.6H172.4" stroke="#8a8a8a" stroke-width="0.9"/><rect x="210.3" y="161.1" width="15.1" height="3.3" rx="0.9" fill="#8e8e8e"/><path d="M217.8 166L225 173.4H210.8Z" fill="#8e8e8e"/><path d="M250 160L257.2 166.7H253.7V173.9H246.3V166.7H242.9Z" fill="#8e8e8e"/><path d="M338.4 160.4H345.8V167.4H349.3L342.1 174.2L334.9 167.4H338.4Z" fill="#8e8e8e"/><path d="M366.6 160.6H381.2L373.9 167.8Z" fill="#8e8e8e"/><rect x="366.3" y="169.8" width="15.1" height="3.3" rx="0.9" fill="#8e8e8e"/><rect x="409.4" y="165.5" width="15.2" height="3.2" rx="0.8" fill="#6c6c6c"/><path d="M516.8 165.5H522.5V160H526.5V165.5H532.6V168.7H526.5V174.7H522.5V168.7H516.8Z" fill="#666"/><path d="M558.5 156.9H571.1L575.7 161.5V178.5H558.5Z" fill="url(#gPg)" stroke="#686868" stroke-width="0.95" stroke-linejoin="round"/><path d="M571.1 156.9V161.5H575.7" fill="#fff" stroke="#686868" stroke-width="0.8" stroke-linejoin="round"/><text x="561.6" y="173.2" font-size="9.4" font-weight="bold" fill="#4a4a4a" textLength="10.6" lengthAdjust="spacingAndGlyphs" font-family='"Liberation Sans", sans-serif'>1:1</text><path d="M590.5 156.9H603.1L607.7 161.5V178.5H590.5Z" fill="url(#gPg)" stroke="#686868" stroke-width="0.95" stroke-linejoin="round"/><path d="M603.1 156.9V161.5H607.7" fill="#fff" stroke="#686868" stroke-width="0.8" stroke-linejoin="round"/><path d="M597.3 159.2V176.4M592.2 167.4H606" stroke="#2e2e2e" stroke-width="0.9" fill="none"/><path d="M597.3 157.9L599 160.9H595.6ZM597.3 177.3L599 174.3H595.6ZM591.2 167.4L594.2 165.7V169.1ZM607 167.4L604 165.7V169.1Z" fill="#2e2e2e"/><path d="M622.4 156.9H635.0L639.6 161.5V178.5H622.4Z" fill="url(#gPg)" stroke="#686868" stroke-width="0.95" stroke-linejoin="round"/><path d="M635.0 156.9V161.5H639.6" fill="#fff" stroke="#686868" stroke-width="0.8" stroke-linejoin="round"/><path d="M624.4 167.4H638" stroke="#2e2e2e" stroke-width="0.9"/><path d="M623.2 167.4L626.4 165.6V169.2ZM638.9 167.4L635.7 165.6V169.2Z" fill="#2e2e2e"/><path d="M666.63 175.44A10.9 10.9 0 1 1 681.63 175.57L684.50 178.30L675.40 178.30L675.40 169.60L678.04 172.34A6.1 6.1 0 1 0 669.96 171.99Z" fill="url(#gRot)" stroke="#2f4e74" stroke-width="0.9" stroke-linejoin="round"/><path d="M714.07 175.44A10.9 10.9 0 1 0 699.07 175.57L696.20 178.30L705.30 178.30L705.30 169.60L702.66 172.34A6.1 6.1 0 1 1 710.74 171.99Z" fill="url(#gRot)" stroke="#2f4e74" stroke-width="0.9" stroke-linejoin="round"/><path d="M745 177.4C743.4 175.6 741.2 172.6 739.2 170.6C738.2 169.6 738.4 168.4 739.4 168C740.6 167.6 741.8 168.2 742.8 169.2L744.6 171L743.6 161.4C743.5 160.4 744 159.8 744.8 159.7C745.6 159.6 746.2 160.2 746.4 161.2L747.4 166.6L747.2 159.2C747.2 158.2 747.8 157.6 748.6 157.6C749.4 157.6 750 158.2 750 159.2L750.4 166.4L751.4 159.6C751.5 158.7 752.1 158.2 752.9 158.3C753.7 158.4 754.1 159.1 754 160L753.4 167.2L755.2 162.2C755.5 161.4 756.2 161 756.9 161.3C757.6 161.6 757.8 162.3 757.6 163.1C756.8 166.4 756.4 169 755.8 172C755.4 174 754.4 175.8 753.2 177.4Z" fill="url(#gHand)" stroke="#3c3c3c" stroke-width="1" stroke-linejoin="round"/><path d="M770.4 158.6H777.8M770.4 177.2H777.8M774.1 158.6V177.2" stroke="#5c5c5c" stroke-width="1.1" fill="none"/><path d="M781.9 159.2V172.6L785 169.8L787.6 176.2L790 175.2L787.4 169L791.4 168.8Z" fill="#6a6a6a"/><path d="M806.2 161.6V156.6H824.6V168.6H816.4" fill="none" stroke="#333" stroke-width="1" stroke-dasharray="2 1.6"/><path d="M813.0 172.0L817.8000000000001 177.20000000000002" stroke="#1c1c1c" stroke-width="2.6" stroke-linecap="round"/><circle cx="808.6" cy="167.4" r="6" fill="url(#gLens)" stroke="#1e1e1e" stroke-width="1.4"/><path d="M844.8 172.0L849.6 177.20000000000002" stroke="#1c1c1c" stroke-width="2.6" stroke-linecap="round"/><circle cx="840.4" cy="167.4" r="6" fill="url(#gLens)" stroke="#1e1e1e" stroke-width="1.4"/><path d="M852.7 156.7L856.4 161.2H849ZM849 164.4H856.4L852.7 169.4Z" fill="#787878"/><path d="M883.8 159V172.8L887 169.8L889.8 176.6L892.2 175.6L889.4 169L893.6 168.6Z" fill="#2a2a2a"/><rect x="906.6" y="158" width="24.2" height="17.6" fill="url(#gPg)" stroke="#687c9c" stroke-width="0.9"/><rect x="909.2" y="159.4" width="11.8" height="12.8" fill="#f5eb58"/><text x="910.6" y="171" font-size="13.5" font-weight="bold" fill="#111" font-family='"Liberation Serif", serif'>T</text><path d="M930.6 163.6L932.9 165.8L920.4 178L917 179.6L918.2 176Z" fill="#b9b9b9" stroke="#2c2c2c" stroke-width="0.9" stroke-linejoin="round"/><path d="M918.2 176L920.4 178L917 179.6Z" fill="#2c2c2c"/><path d="M943.2 172.8C939.6 171.6 937.4 169.4 937.4 166.6C937.4 162.3 942.1 158.9 947.9 158.9C953.7 158.9 958.4 162.3 958.4 166.6C958.4 170.9 953.7 174.3 947.9 174.3C947 174.3 946.2 174.2 945.4 174.1C944 175.2 942 175.8 939.8 175.8C941.6 175 942.8 174 943.2 172.8Z" fill="#f6ef8c" stroke="#4c4a28" stroke-width="0.9" stroke-linejoin="round"/><path d="M941.4 163.5H954M941.4 166.1H955.6M942 168.8H950.2" stroke="#8d8a2c" stroke-width="1.4"/><path d="M986.8 156.8H999.2L1003.6 161.2V178.4H986.8Z" fill="url(#gGp)" stroke="#b4b4b4" stroke-width="0.8"/><path d="M999.2 156.8V161.2H1003.6Z" fill="#f8f8f8" stroke="#b4b4b4" stroke-width="0.6"/><rect x="987.6" y="160.6" width="15.4" height="2.8" fill="#b6a8b8"/><path d="M987.6 166.6H1003M987.6 168.8H1003" stroke="#f6f6f6" stroke-width="0.9"/><path d="M987.6 165.4H1003" stroke="#bdb4c0" stroke-width="0.8"/></svg>
<svg class="a" style="left:1130px;top:606px" width="118" height="26" viewBox="1130 606 118 26" ><defs><linearGradient id="gPb" x1="0" y1="0" x2="0.7" y2="1"><stop offset="0" stop-color="#fff"/><stop offset="0.55" stop-color="#f6f8fc"/><stop offset="1" stop-color="#c4d2e8"/></linearGradient></defs><path d="M1133.4 610.4H1142.6L1146.0 613.8V626.6H1133.4Z" fill="url(#gPb)" stroke="#2c2c2c" stroke-width="0.9" stroke-linejoin="round"/><path d="M1142.6 610.4V613.8H1146.0" fill="none" stroke="#2c2c2c" stroke-width="0.7"/><path d="M1164.4 610.2V617.2H1177.6V610.2" fill="url(#gPb)" stroke="#2c2c2c" stroke-width="0.9"/><path d="M1164.4 619.6H1174.6000000000001L1177.6000000000001 622.6V626.8000000000001H1164.4Z" fill="url(#gPb)" stroke="#2c2c2c" stroke-width="0.9" stroke-linejoin="round"/><path d="M1174.6000000000001 619.6V622.6H1177.6000000000001" fill="none" stroke="#2c2c2c" stroke-width="0.7"/><path d="M1194.2 610.4H1199.4L1202.2 613.1999999999999V626.6H1194.2Z" fill="url(#gPb)" stroke="#2c2c2c" stroke-width="0.9" stroke-linejoin="round"/><path d="M1199.4 610.4V613.1999999999999H1202.2" fill="none" stroke="#2c2c2c" stroke-width="0.7"/><path d="M1203.4 610.4H1208.6000000000001L1211.4 613.1999999999999V626.6H1203.4Z" fill="url(#gPb)" stroke="#2c2c2c" stroke-width="0.9" stroke-linejoin="round"/><path d="M1208.6000000000001 610.4V613.1999999999999H1211.4" fill="none" stroke="#2c2c2c" stroke-width="0.7"/><path d="M1225.2 610.2V616.8H1233.4V610.2M1235.4 610.2V616.8H1243.6V610.2" fill="url(#gPb)" stroke="#2c2c2c" stroke-width="0.9"/><path d="M1225.2 619.4H1230.4L1233.4 622.4V626.8H1225.2Z" fill="url(#gPb)" stroke="#2c2c2c" stroke-width="0.9" stroke-linejoin="round"/><path d="M1230.4 619.4V622.4H1233.4" fill="none" stroke="#2c2c2c" stroke-width="0.7"/><path d="M1235.4 619.4H1240.6000000000001L1243.6000000000001 622.4V626.8H1235.4Z" fill="url(#gPb)" stroke="#2c2c2c" stroke-width="0.9" stroke-linejoin="round"/><path d="M1240.6000000000001 619.4V622.4H1243.6000000000001" fill="none" stroke="#2c2c2c" stroke-width="0.7"/></svg>
</body></html>
